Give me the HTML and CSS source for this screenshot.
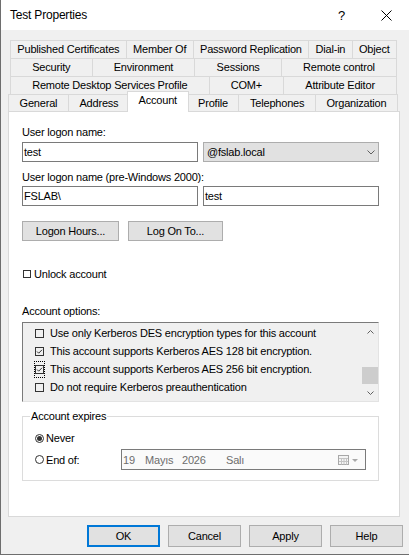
FILE: index.html
```html
<!DOCTYPE html>
<html>
	<head>
		<meta charset="utf-8">
		<title>Test Properties</title>
		<link rel="stylesheet" href="styles.css">
	</head>
	<body>
		<div id="window">
			<div class="titlebar">
				<span class="title">Test Properties</span>
				<span class="help">?</span>
				<span class="close">
					<svg width="11" height="11" viewBox="0 0 11 11"><path d="M0.5 0.5L10.5 10.5M10.5 0.5L0.5 10.5" stroke="#000" stroke-width="1" fill="none"/></svg>
				</span>
			</div>
			<div class="dialog">
				<div class="tabs">
					<div class="tab-row">
						<a class="tab">Published Certificates</a>
						<a class="tab">Member Of</a>
						<a class="tab">Password Replication</a>
						<a class="tab">Dial-in</a>
						<a class="tab">Object</a>
					</div>
					<div class="tab-row">
						<a class="tab">Security</a>
						<a class="tab">Environment</a>
						<a class="tab">Sessions</a>
						<a class="tab">Remote control</a>
					</div>
					<div class="tab-row">
						<a class="tab">Remote Desktop Services Profile</a>
						<a class="tab">COM+</a>
						<a class="tab">Attribute Editor</a>
					</div>
					<div class="tab-row front">
						<a class="tab">General</a>
						<a class="tab">Address</a>
						<a class="tab active">Account</a>
						<a class="tab">Profile</a>
						<a class="tab">Telephones</a>
						<a class="tab">Organization</a>
					</div>
				</div>
				<div class="panel">
					<div class="lbl">User logon name:</div>
					<div class="field-row">
						<div class="textbox">test</div>
						<div class="combo">
							<span>@fslab.local</span>
							<svg width="8" height="5" viewBox="0 0 8 5"><path d="M0.5 0.5L4 4L7.5 0.5" fill="none" stroke="#606060"/></svg>
						</div>
					</div>
					<div class="lbl lbl-2">User logon name (pre-Windows 2000):</div>
					<div class="field-row second">
						<div class="textbox">FSLAB\</div>
						<div class="textbox">test</div>
					</div>
					<div class="btn-row">
						<button class="btn btn-hours">Logon Hours...</button>
						<button class="btn btn-logon">Log On To...</button>
					</div>
					<div class="check-line"><span class="box small"></span>Unlock account</div>
					<div class="lbl opts-lbl">Account options:</div>
					<div class="listbox">
						<ul class="opts">
							<li><span class="cell"><span class="box"></span></span>Use only Kerberos DES encryption types for this account</li>
							<li><span class="cell"><svg width="9" height="9" viewBox="0 0 9 9"><rect x="0.5" y="0.5" width="8" height="8" fill="none" stroke="#333"/><path d="M2 4.5L3.7 6.2L7 2.8" fill="none" stroke="#333"/></svg></span>This account supports Kerberos AES 128 bit encryption.</li>
							<li><span class="cell focus"><svg width="9" height="9" viewBox="0 0 9 9"><rect x="0.5" y="0.5" width="8" height="8" fill="none" stroke="#333"/><path d="M2 4.5L3.7 6.2L7 2.8" fill="none" stroke="#333"/></svg></span>This account supports Kerberos AES 256 bit encryption.</li>
							<li><span class="cell"><span class="box"></span></span>Do not require Kerberos preauthentication</li>
						</ul>
						<div class="scrollbar">
							<div class="sb-btn"><svg width="7" height="4" viewBox="0 0 7 4"><path d="M0.5 3.5L3.5 0.5L6.5 3.5" fill="none" stroke="#606060"/></svg></div>
							<div class="sb-track"><div class="sb-thumb"></div></div>
							<div class="sb-btn"><svg width="7" height="4" viewBox="0 0 7 4"><path d="M0.5 0.5L3.5 3.5L6.5 0.5" fill="none" stroke="#606060"/></svg></div>
						</div>
					</div>
					<fieldset class="expires">
						<legend>Account expires</legend>
						<div class="radio-line never"><span class="radio on"></span>Never</div>
						<div class="radio-line endof">
							<span class="radio"></span><span class="radio-text">End of:</span>
							<div class="datepick">
								<span class="dp-day">19</span>
								<span class="dp-mon">Mayıs</span>
								<span class="dp-yr">2026</span>
								<span class="dp-wd">Salı</span>
								<svg width="21" height="10" viewBox="0 0 21 10"><rect x="0.5" y="0.5" width="10" height="9" fill="#f4f4f4" stroke="#a8a8a8"/><path d="M1 3.5H10M1 6.5H10M3.5 3V9.5M6 3V9.5M8.5 3V9.5" stroke="#c4c4c4" fill="none"/><path d="M14 4H20L17 7Z" fill="#a8a8a8"/></svg>
							</div>
						</div>
					</fieldset>
				</div>
				<div class="actions">
					<button class="btn dlg default">OK</button>
					<button class="btn dlg">Cancel</button>
					<button class="btn dlg">Apply</button>
					<button class="btn dlg">Help</button>
				</div>
			</div>
		</div>
	</body>
</html>
```

FILE: styles.css
```css
*{margin: 0;padding: 0;box-sizing: border-box;}
html,
body{width: 100%;height: 100%;overflow: hidden;}
body{font-family: "Liberation Sans", Arial, sans-serif;font-size: 11px;letter-spacing: -0.2px;color: #000;background: #fff;}
#window{width: 409px;height: 555px;background: #f0f0f0;border-left: 1px solid #6e6e6e;border-bottom: 1px solid #6e6e6e;}

/* title bar */
.titlebar{height: 30px;background: #fff;display: flex;align-items: center;padding-left: 9px;}
.title{flex: 1;font-size: 12px;}
.help{width: 15px;text-align: center;font-size: 13px;}
.close{width: 20px;margin: 0 13px 0 27px;display: flex;justify-content: center;}

.dialog{padding: 10px 0 0 7px;}

/* tabs */
.tab-row{display: flex;align-items: flex-start;width: 387px;height: 18px;margin-left: 2px;}
.tab{flex: 1 1 auto;padding: 0 3px;border-top: 1px solid #d9d9d9;border-left: 1px solid #d9d9d9;
	line-height: 17px;text-align: center;white-space: nowrap;}
.tab:last-child{border-right: 1px solid #d9d9d9;}
.tab-row.front{width: 390px;height: 17px;margin-left: 0;}
.tab-row.front .tab{line-height: 16px;}
.tab-row.front .tab.active{position: relative;z-index: 1;height: 21px;margin: -3px -2px 0;
	background: #fff;border-right: 1px solid #d9d9d9;line-height: 17px;}

/* page */
.panel{width: 392px;height: 406px;padding: 12px 0 0 13px;background: #fff;border: 1px solid #d9d9d9;}
.lbl{line-height: 16px;}
.lbl-2{margin-top: 7px;}
.field-row{display: flex;gap: 5px;margin-top: 2px;}
.field-row.second{margin-top: 1px;}
.textbox{width: 176px;height: 20px;padding-left: 1px;border: 1px solid #7a7a7a;background: #fff;line-height: 18px;}
.combo{width: 176px;height: 20px;padding: 0 3px 0 3px;display: flex;align-items: center;justify-content: space-between;
	background: #e1e1e1;border: 1px solid #adadad;}
.btn{height: 20px;background: #e1e1e1;border: 1px solid #adadad;font: inherit;letter-spacing: inherit;color: #000;}
.btn-row{display: flex;gap: 9px;margin-top: 15px;}
.btn-hours{width: 97px;}
.btn-logon{width: 95px;}

.check-line{display: flex;align-items: center;line-height: 16px;margin: 25px 0 0 1px;}
.box{display: block;width: 9px;height: 9px;border: 1px solid #333;}
.box.small{width: 8px;height: 8px;margin-right: 3px;}

.opts-lbl{margin-top: 21px;}
.listbox{display: flex;width: 357px;height: 80px;margin-top: 3px;background: #f0f0f0;
	border: 1px solid;border-color: #7a7a7a #e3e3e3 #e3e3e3 #7a7a7a;}
.opts{flex: 1;list-style: none;padding-top: 1px;}
.opts li{display: flex;align-items: center;height: 18px;padding-left: 11px;white-space: nowrap;}
.cell{display: flex;align-items: center;justify-content: center;width: 11px;height: 17px;margin-right: 5px;}
.cell.focus{outline: 1px dotted #000;outline-offset: -1px;}
.scrollbar{display: flex;flex-direction: column;width: 16px;}
.sb-btn{display: flex;align-items: center;justify-content: center;height: 17px;}
.sb-track{flex: 1;display: flex;flex-direction: column;justify-content: flex-end;}
.sb-thumb{height: 17px;background: #cdcdcd;}

/* account expires */
.expires{width: 357px;margin-top: 6px;padding: 0 12px 10px;border: 1px solid #dcdcdc;}
.expires legend{margin-left: -5px;padding: 0 1px;line-height: 16px;}
.radio-line{display: flex;align-items: center;}
.never{height: 20px;margin-top: 4px;}
.endof{height: 21px;margin-top: 1px;}
.radio{display: flex;align-items: center;justify-content: center;width: 9px;height: 9px;margin-right: 2px;
	border: 1px solid #333;border-radius: 50%;}
.radio.on::after{content: "";width: 5px;height: 5px;border-radius: 50%;background: #333;}
.radio-text{width: 75px;}
.datepick{display: flex;align-items: center;width: 245px;height: 21px;padding: 0 6px 0 1px;
	background: #fafafa;border: 1px solid #7a7a7a;color: #6d6d6d;}
.dp-day{width: 22px;}
.dp-mon{width: 37px;}
.dp-yr{width: 44px;}
.dp-wd{flex: 1;}

/* dialog buttons */
.actions{display: flex;justify-content: flex-end;gap: 8px;margin-top: 8px;padding-right: 6px;}
.dlg{width: 73px;height: 22px;}
.default{border: 2px solid #0078d7;}
```
